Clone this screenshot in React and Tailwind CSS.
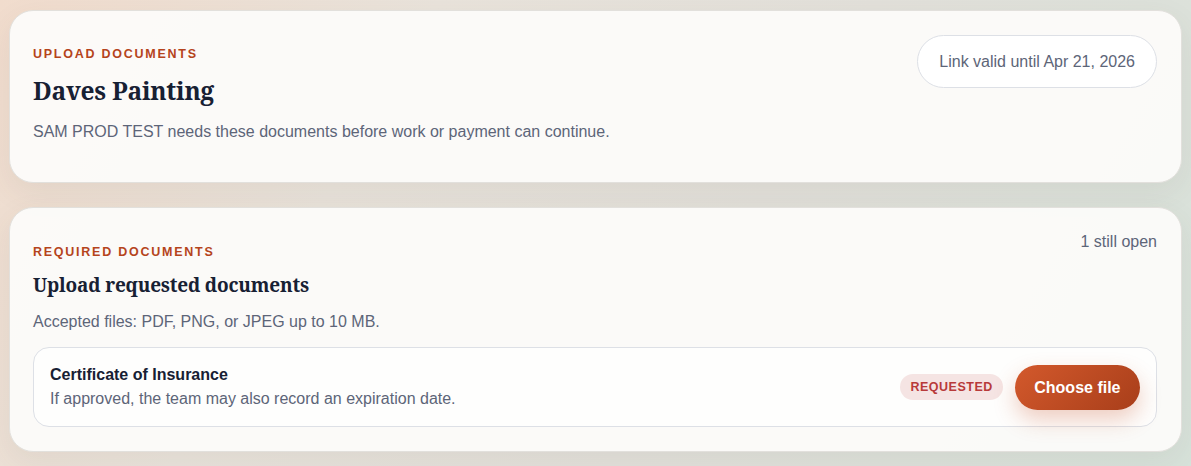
export default function App() {
  return (
    <div className="min-h-[466px] bg-[linear-gradient(120deg,#f1dccd_0%,#e9e3db_30%,#e2e0da_60%,#d7e2da_100%)] px-[9px] pt-[10px] pb-4 font-['Liberation_Sans',Arial,sans-serif]">
      <div className="flex flex-col gap-[24px]">
        <section className="flex items-start justify-between rounded-[24px] border border-[#e2e0dc] bg-[#fcfbfa]/95 pl-[23px] pr-6 pt-6 pb-[38px] shadow-[0_10px_30px_rgba(90,80,60,0.08)]">
          <div>
            <p className="mt-[11px] text-[12.5px] font-bold uppercase leading-4 tracking-[0.14em] text-[#b5441c]">Upload documents</p>
            <h1 className="mt-[13px] font-['Noto_Serif','DejaVu_Serif_Condensed','DejaVu_Serif',serif] text-[24.5px] font-bold leading-8 tracking-[-0.01em] text-[#172033]">Daves Painting</h1>
            <p className="mt-[13px] text-base leading-6 text-[#5d6578]">SAM PROD TEST needs these documents before work or payment can continue.</p>
          </div>
          <div className="rounded-full border border-[#dde0e6] bg-white px-[21px] py-[15px] text-base leading-[21px] text-[#5d6578]">
            Link valid until Apr 21, 2026
          </div>
        </section>

        <section className="rounded-[24px] border border-[#e2e0dc] bg-[#fcfbfa]/95 pl-[23px] pr-6 pt-6 pb-[24px] shadow-[0_10px_30px_rgba(90,80,60,0.08)]">
          <div className="flex items-start justify-between">
            <div>
              <p className="mt-[12px] text-[12.5px] font-bold uppercase leading-4 tracking-[0.14em] text-[#b5441c]">Required documents</p>
              <h2 className="mt-[11px] font-['Noto_Serif','DejaVu_Serif_Condensed','DejaVu_Serif',serif] text-[19px] font-bold leading-7 tracking-[-0.01em] text-[#172033]">Upload requested documents</h2>
              <p className="mt-[11px] text-base leading-6 text-[#5d6578]">Accepted files: PDF, PNG, or JPEG up to 10 MB.</p>
            </div>
            <p className="-mt-[2px] text-base leading-6 text-[#5d6578]">1 still open</p>
          </div>

          <div className="mt-[13px] flex items-center justify-between rounded-[16px] border border-[#dde0e6] bg-white/70 py-[15px] pl-4 pr-4">
            <div>
              <p className="text-base font-bold leading-6 text-[#172033]">Certificate of Insurance</p>
              <p className="text-base leading-6 text-[#5d6578]">If approved, the team may also record an expiration date.</p>
            </div>
            <div className="flex items-center gap-3">
              <span className="rounded-full bg-[#f5e4e3] px-[10px] py-[5px] text-[12.5px] font-bold uppercase leading-4 tracking-[0.04em] text-[#b83a3a]">Requested</span>
              <button className="rounded-full bg-[linear-gradient(135deg,#d3592c,#a83e1a)] px-[19.5px] py-[12px] text-base font-bold leading-[21px] text-white shadow-[0_10px_22px_rgba(196,80,40,0.28)]">
                Choose file
              </button>
            </div>
          </div>
        </section>
      </div>
    </div>
  );
}
